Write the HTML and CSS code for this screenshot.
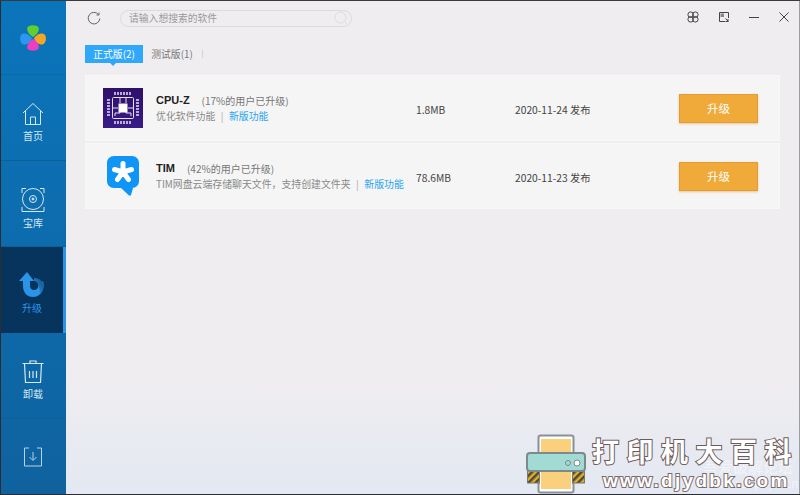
FILE: index.html
```html
<!DOCTYPE html>
<html lang="zh-CN">
<head>
    <meta charset="UTF-8">
    <title>软件管家</title>
    <link rel="stylesheet" href="styles.css">
</head>
<body>
    <div class="window">
        <div class="sidebar">
            <div class="logo">
                <svg width="28" height="28" viewBox="0 0 28 28">
                    <path d="M14 13C9 10 7.500 6 8.500 3.500C10 .5 18 .5 19.500 3.500C20.500 6 19 10 14 13Z" fill="#5fd02e"/>
                    <path d="M13 14C9 9 4 8.500 2 11C0 14 1.500 20 4.500 20.500C8 21 12 18 13 14Z" fill="#2c97ef"/>
                    <path d="M15 14C19 9 24 8.500 26 11C28 14 26.500 20 23.500 20.500C20 21 16 18 15 14Z" fill="#f5a623"/>
                    <path d="M14 15C9 18 7.500 22 8.500 24.500C10 27.500 18 27.500 19.500 24.500C20.500 22 19 18 14 15Z" fill="#ea3fc0"/>
                </svg>
            </div>
            <div class="nav-item">
                <svg width="22" height="24" viewBox="0 0 22 24" fill="none" stroke="#d5e8f5" stroke-width="1">
                    <path d="M1 11L11 1.500L21 11M3.500 9V22.500H18.500V9M8.500 22.500V15H13.500V22.500"/>
                </svg>
                <span>首页</span>
            </div>
            <div class="nav-item">
                <svg width="24" height="26" viewBox="0 0 24 26" fill="none" stroke="#d5e8f5" stroke-width="1">
                    <circle cx="12" cy="12" r="10.500"/>
                    <circle cx="12" cy="12" r="3.500"/>
                    <circle cx="12" cy="12" r="1" fill="#d5e8f5"/>
                    <path d="M1 6V1.500H5M23 6V1.500H19M1 20V24.500H23V20"/>
                </svg>
                <span>宝库</span>
            </div>
            <div class="nav-item active">
                <svg width="26" height="26" viewBox="0 0 26 26">
                    <defs>
                        <linearGradient id="upgradeTail" x1="0" y1="1" x2="1" y2="0">
                            <stop offset="0" stop-color="#2a95e8"/>
                            <stop offset="1" stop-color="#124f86"/>
                        </linearGradient>
                    </defs>
                    <path d="M0 9L8 0L15 9H11V14C11 16.500 13 18 15 18C17.500 18 19.500 16 19.500 13.500L24 9C24.600 10.500 24.500 12 24.500 14C24.500 20 20 25 14 25C8 25 4 20.500 4 14V9Z" fill="#2a95e8"/>
                    <path d="M15 6C20 6 24.500 9 24.500 14C24.500 17 23 20 21 22C21 19 20 15 19.500 13.500C19 11 17 9 15 9Z" fill="url(#upgradeTail)"/>
                </svg>
                <span>升级</span>
            </div>
            <div class="nav-item">
                <svg width="22" height="24" viewBox="0 0 22 24" fill="none" stroke="#d5e8f5" stroke-width="1.200">
                    <path d="M.500 3.500H21.500M8 3.500V1H14V3.500M2.500 3.500L3.500 22.500H18.500L19.500 3.500M7.500 11V18M11 11V18M14.500 11V18"/>
                </svg>
                <span>卸载</span>
            </div>
            <div class="nav-item bottom">
                <svg width="18" height="20" viewBox="0 0 18 20" fill="none" stroke="#b7d3e8" stroke-width="1">
                    <path d="M5 1H.500V19H17.500V1H13M9 5V13M5.500 10L9 13.500L12.500 10"/>
                </svg>
            </div>
        </div>

        <div class="main">
            <div class="topbar">
                <svg class="refresh" width="14" height="14" viewBox="0 0 14 14" fill="none" stroke="#666" stroke-width="1">
                    <path d="M11.500 3.500A5.800 5.800 0 1 0 12.800 7.500M12 1.500V4H9.500"/>
                </svg>
                <div class="search">
                    <span>请输入想搜索的软件</span>
                    <svg width="14" height="14" viewBox="0 0 14 14" fill="none" stroke="#dcdcdc" stroke-width="1">
                        <circle cx="6.500" cy="6.500" r="5.500"/>
                        <path d="M10.500 10.500L13 13"/>
                    </svg>
                </div>
                <div class="win-btns">
                    <svg width="12" height="12" viewBox="0 0 12 12" fill="none" stroke="#444" stroke-width="1">
                        <circle cx="3.700" cy="3.700" r="2.800"/>
                        <circle cx="8.300" cy="3.700" r="2.800"/>
                        <circle cx="3.700" cy="8.300" r="2.800"/>
                        <circle cx="8.300" cy="8.300" r="2.800"/>
                    </svg>
                    <svg width="10" height="10" viewBox="0 0 10 10" fill="none" stroke="#444" stroke-width="1">
                        <path d="M.500 .500H9.500V6M6 9.500H.500V.500"/>
                        <rect x="1.500" y="1.500" width="3.500" height="3.500" fill="#888" stroke="none"/>
                        <path d="M6.500 6.500L9.500 9.500M9 7V9.500H6.500"/>
                    </svg>
                    <svg width="10" height="10" viewBox="0 0 10 10" fill="none" stroke="#444" stroke-width="1">
                        <path d="M0 5.500H10"/>
                    </svg>
                    <svg width="10" height="10" viewBox="0 0 10 10" fill="none" stroke="#444" stroke-width="1">
                        <path d="M.500 .500L9.500 9.500M9.500 .500L.500 9.500"/>
                    </svg>
                </div>
            </div>

            <div class="tabs">
                <div class="tab current">正式版(2)</div>
                <div class="tab">测试版(1)</div>
                <div class="tab-line"></div>
            </div>

            <div class="list">
                <div class="row">
                    <div class="app-icon">
                        <svg width="40" height="40" viewBox="0 0 40 40">
                            <defs>
                                <linearGradient id="cpuBg" x1="0" y1="0" x2="0" y2="1">
                                    <stop offset="0" stop-color="#2f1069"/>
                                    <stop offset="1" stop-color="#3a1a88"/>
                                </linearGradient>
                            </defs>
                            <rect width="40" height="40" fill="url(#cpuBg)"/>
                            <g fill="none" stroke="#e6dff2" stroke-width="1">
                                <rect x="9.500" y="9.500" width="21" height="21" rx="1"/>
                                <path d="M12 28V25H17V23M28 28V25H23V23M17 10V15M23 10V15M10 20H15M25 20H30"/>
                            </g>
                            <rect x="15.500" y="15.500" width="9" height="9" fill="#fff"/>
                            <path d="M4 12H7M4 15H7M4 18H7M4 21H7M4 24H7M4 27H7M33 12H36M33 15H36M33 18H36M33 21H36M33 24H36M33 27H36M12 4V7M15 4V7M18 4V7M21 4V7M24 4V7M27 4V7M12 33V36M15 33V36M18 33V36M21 33V36M24 33V36M27 33V36" stroke="#e6dff2" stroke-width="1.500"/>
                        </svg>
                    </div>
                    <div class="info">
                        <div class="title"><b>CPU-Z</b><span>(17%的用户已升级)</span></div>
                        <div class="desc">优化软件功能<i>|</i><a href="#">新版功能</a></div>
                    </div>
                    <div class="size">1.8MB</div>
                    <div class="date">2020-11-24 发布</div>
                    <button class="upgrade">升级</button>
                </div>
                <div class="row">
                    <div class="app-icon">
                        <svg width="32" height="40" viewBox="0 0 32 40">
                            <path d="M7 0H25C29 0 32 3 32 7V25C32 29 29 32 25 32H26L24 39C23.500 40 22.500 40 21.500 39L14 32H7C3 32 0 29 0 25V7C0 3 3 0 7 0Z" fill="#0f94f7"/>
                            <path d="M16 16V7.500M16 16L24.500 13.500M16 16L21.500 23.500M16 16L10.500 23.500M16 16L7.500 13.500" stroke="#fff" stroke-width="5" stroke-linecap="round" fill="none"/>
                        </svg>
                    </div>
                    <div class="info">
                        <div class="title"><b>TIM</b><span>(42%的用户已升级)</span></div>
                        <div class="desc">TIM网盘云端存储聊天文件，支持创建文件夹<i>|</i><a href="#">新版功能</a></div>
                    </div>
                    <div class="size">78.6MB</div>
                    <div class="date">2020-11-23 发布</div>
                    <button class="upgrade">升级</button>
                </div>
            </div>
        </div>
    </div>

    <!-- 水印 -->
    <div class="faint-mark">
        <div>吾爱破解论坛</div>
        <div class="faint-url">www.52pojie.cn</div>
    </div>
    <div class="watermark">
        <svg width="60" height="60" viewBox="0 0 60 60">
            <defs>
                <pattern id="hazard" width="5" height="5" patternUnits="userSpaceOnUse" patternTransform="rotate(45)">
                    <rect width="5" height="5" fill="#e5ae1f"/>
                    <rect width="2.500" height="5" fill="#4a4a44"/>
                </pattern>
            </defs>
            <rect x="12.500" y="1.500" width="35" height="57" rx="2" fill="#fff" stroke="#8a8f98" stroke-width="2"/>
            <rect x="15" y="5" width="30" height="50" fill="#fbd07c"/>
            <rect x="1.500" y="36" width="12" height="13" fill="url(#hazard)" stroke="#777" stroke-width="1"/>
            <rect x="46.500" y="36" width="12" height="13" fill="url(#hazard)" stroke="#777" stroke-width="1"/>
            <rect x="1" y="19" width="58" height="18" rx="3" fill="#a2dad4" stroke="#7c8a8e" stroke-width="2"/>
            <circle cx="42" cy="29" r="2.500" fill="#a2dad4" stroke="#7c8a8e" stroke-width="1"/>
            <circle cx="51" cy="29" r="3" fill="#fff" stroke="#7c8a8e" stroke-width="1"/>
        </svg>
        <div class="wm-text">
            <div class="wm-cn">打印机大百科</div>
            <div class="wm-url">www.djydbk.com</div>
        </div>
    </div>
</body>
</html>
```

FILE: styles.css
```css
html, body {
    margin: 0;
    height: 100%;
    overflow: hidden;
}
body {
    position: relative;
    background-color: #2b2d31;
    font-family: "Noto Sans CJK SC", "Liberation Sans", sans-serif;
    font-size: 10px;
}
.window {
    display: flex;
    height: 494px;
    padding-left: 1px;
    box-sizing: border-box;
    border-top: 1px solid #3a3a3c;
}
.sidebar {
    display: flex;
    flex-direction: column;
    width: 65px;
    flex-shrink: 0;
    background: linear-gradient(#0b75bb, #0f629e);
}
.logo {
    display: flex;
    justify-content: center;
    align-items: center;
    height: 73px;
    padding-right: 1px;
    border-bottom: 1px solid #0d68a6;
}
.nav-item {
    display: flex;
    flex-direction: column;
    align-items: center;
    justify-content: center;
    gap: 3px;
    height: 86px;
    padding: 8px 1px 0 0;
    box-sizing: border-box;
    border-bottom: 1px solid #0d5f98;
    color: #d5e8f5;
    font-size: 10px;
    line-height: 13px;
}
.nav-item.active {
    padding: 6px 0 0;
    background-color: #06345c;
    border-right: 3px solid #2a95e8;
    border-bottom: none;
    color: #2a95e8;
}
.nav-item.bottom {
    flex: 1;
    height: auto;
    padding-top: 0;
    border-bottom: none;
}
.main {
    flex: 1;
    display: flex;
    flex-direction: column;
    background: linear-gradient(#efedf0 0, #efedf0 380px, #e3e8f2 494px);
    border-right: 1px solid #9b9ea4;
}
.topbar {
    display: flex;
    align-items: center;
    height: 34px;
    padding-left: 21px;
}
.refresh {
    margin-right: 19px;
}
.search {
    display: flex;
    align-items: center;
    justify-content: space-between;
    width: 219px;
    height: 15px;
    padding: 0 3px 0 8px;
    border: 1px solid #dcdadd;
    border-radius: 9px;
    color: #9a9a9a;
    font-size: 9.800px;
}
.win-btns {
    display: flex;
    align-items: center;
    gap: 20px;
    margin-left: auto;
    padding: 0 10px 2px 0;
}
.tabs {
    display: flex;
    align-items: center;
    height: 18px;
    margin: 10px 0 0 19px;
    font-size: 9.800px;
    color: #777;
}
.tab {
    width: 58px;
    line-height: 18px;
    text-align: center;
}
.tab.current {
    position: relative;
    background-color: #2fa8fb;
    color: #fff;
}
.tab.current::after {
    content: "";
    position: absolute;
    left: 25px;
    bottom: -3px;
    border: 3px solid transparent;
    border-top-color: #2fa8fb;
    border-bottom: none;
}
.tab-line {
    width: 1px;
    height: 8px;
    margin-left: 1px;
    background-color: #d4d4d4;
}
.list {
    display: flex;
    flex-direction: column;
    gap: 2px;
    margin: 12px 19px 0;
}
.row {
    display: flex;
    align-items: center;
    height: 64px;
    background-color: #f5f5f5;
    border: 1px solid #f8f8f8;
}
.app-icon {
    display: flex;
    justify-content: center;
    width: 40px;
    margin-left: 17px;
}
.info {
    width: 260px;
    margin-left: 13px;
}
.title {
    display: flex;
    align-items: center;
    height: 16px;
    color: #777;
    font-size: 10px;
}
.title b {
    margin-right: 12px;
    color: #222;
    font-family: "Liberation Sans", sans-serif;
    font-size: 11px;
}
.desc {
    height: 16px;
    line-height: 16px;
    color: #8a8a8a;
    font-size: 9.900px;
    white-space: nowrap;
}
.desc i {
    margin: 0 5.500px;
    font-style: normal;
    color: #aaa;
}
.desc a {
    color: #27a4f2;
    text-decoration: none;
}
.size, .date {
    padding-top: 2px;
    color: #444;
    font-size: 10.250px;
}
.size {
    width: 99px;
}
.date {
    width: 164px;
}
.upgrade {
    width: 79px;
    height: 29px;
    padding: 0;
    background-color: #efaa39;
    border: 1px solid #e59a36;
    box-shadow: 0 1px 2px #e8c891;
    color: #fff;
    font-family: inherit;
    font-size: 11.500px;
}
.faint-mark {
    position: absolute;
    left: 703px;
    top: 459px;
    color: #f2f4f8;
    font-size: 15px;
    line-height: 16px;
    white-space: nowrap;
}
.faint-url {
    margin-left: 6px;
    font-size: 12px;
}
.watermark {
    position: absolute;
    left: 526px;
    top: 434px;
    display: flex;
    gap: 6px;
}
.wm-text {
    margin-top: 2px;
}
.wm-cn {
    color: #fff;
    font-size: 27px;
    line-height: 30px;
    letter-spacing: 7.500px;
    font-weight: 700;
    -webkit-text-stroke: 2px #6d5a5a;
    paint-order: stroke fill;
    white-space: nowrap;
}
.wm-url {
    margin: 6px 0 0 11px;
    color: #fff;
    font-family: "Liberation Sans", sans-serif;
    font-size: 19px;
    line-height: 18px;
    letter-spacing: 2.300px;
    font-weight: 700;
    -webkit-text-stroke: 2px #7d6a6a;
    paint-order: stroke fill;
    white-space: nowrap;
}
```
